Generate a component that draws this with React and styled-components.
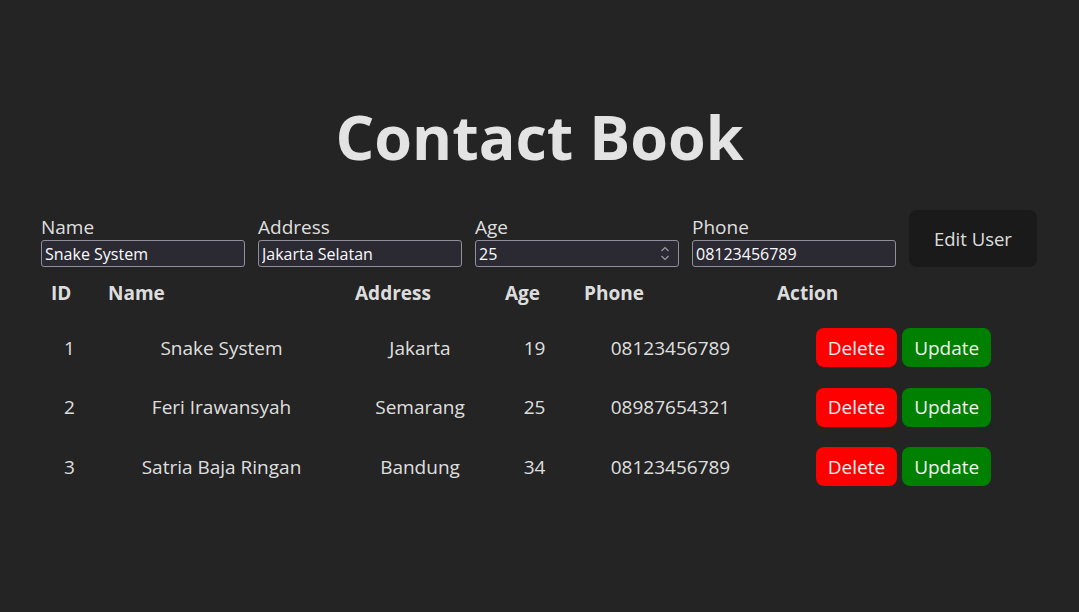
import styled, { createGlobalStyle } from "styled-components";

const GlobalStyle = createGlobalStyle`
  html, body {
    margin: 0;
    background: #242424;
    color: rgba(255, 255, 255, 0.87);
    font-family: "Open Sans", "Noto Sans", sans-serif;
  }
`;

const Page = styled.div`
  width: 1079px;
  height: 612px;
  box-sizing: border-box;
  padding: 95px 41px 0;
`;

const Title = styled.h1`
  margin: 0 0 31px;
  text-align: center;
  font-size: 61px;
  line-height: 84px;
  font-weight: 700;
  color: #e3e3e3;
`;

const Form = styled.form`
  display: flex;
  align-items: flex-end;
  gap: 13px;
`;

const Field = styled.label`
  display: flex;
  flex-direction: column;
  width: 204px;
  font-size: 19px;
  line-height: 25px;
`;

const InputWrap = styled.div`
  position: relative;
`;

const Input = styled.input`
  box-sizing: border-box;
  width: 100%;
  height: 27px;
  padding: 0 3px;
  background: #2b2a33;
  border: 1px solid #8f8f9d;
  border-radius: 3px;
  color: #fbfbfe;
  font-family: "Open Sans", sans-serif;
  font-size: 16px;
  outline: none;
`;

const Spinner = styled.svg`
  position: absolute;
  right: 9px;
  top: 6px;
  width: 10px;
  height: 15px;
`;

const EditButton = styled.button`
  height: 57px;
  padding: 0 25px;
  border: none;
  border-radius: 8px;
  background: #1a1a1a;
  color: rgba(255, 255, 255, 0.87);
  font-family: "Open Sans", sans-serif;
  font-size: 18.5px;
  font-weight: 500;
`;

const Table = styled.table`
  width: 999px;
  margin-top: 1px;
  border-spacing: 0;
  table-layout: fixed;
  font-size: 19px;
`;

const Th = styled.th`
  width: ${(p) => p.w - 20}px;
  height: 50px;
  padding: 0 10px;
  text-align: left;
  font-weight: 700;
  vertical-align: middle;
`;

const Td = styled.td`
  height: 59.5px;
  padding: 0 10px;
  text-align: center;
  vertical-align: middle;
  white-space: nowrap;
`;

const Actions = styled.div`
  display: flex;
  justify-content: center;
  gap: 5px;
`;

const ActionButton = styled.button`
  height: 39px;
  padding: 0 12px;
  border: none;
  border-radius: 8px;
  background: ${(p) => (p.danger ? "#ff0000" : "#008000")};
  color: #f2f2f2;
  font-family: "Open Sans", sans-serif;
  font-size: 19px;
`;

const contacts = [
  { id: 1, name: "Snake System", address: "Jakarta", age: 19, phone: "08123456789" },
  { id: 2, name: "Feri Irawansyah", address: "Semarang", age: 25, phone: "08987654321" },
  { id: 3, name: "Satria Baja Ringan", address: "Bandung", age: 34, phone: "08123456789" },
];

const columns = [
  ["ID", 57],
  ["Name", 247],
  ["Address", 150],
  ["Age", 79],
  ["Phone", 193],
  ["Action", 273],
];

const App = () => {
  return (
    <Page>
      <GlobalStyle />
      <Title>Contact Book</Title>

      <Form onSubmit={(e) => e.preventDefault()}>
        <Field>
          Name
          <Input defaultValue="Snake System" />
        </Field>
        <Field>
          Address
          <Input defaultValue="Jakarta Selatan" />
        </Field>
        <Field>
          Age
          <InputWrap>
            <Input defaultValue="25" />
            <Spinner viewBox="0 0 10 15" fill="none" stroke="#9a9aa6" strokeWidth="1.2">
              <path d="M1.5 5 L5 1.5 L8.5 5" />
              <path d="M1.5 10 L5 13.5 L8.5 10" />
            </Spinner>
          </InputWrap>
        </Field>
        <Field>
          Phone
          <Input defaultValue="08123456789" />
        </Field>
        <EditButton type="submit">Edit User</EditButton>
      </Form>

      <Table>
        <thead>
          <tr>
            {columns.map(([label, w]) => (
              <Th key={label} w={w}>
                {label}
              </Th>
            ))}
          </tr>
        </thead>
        <tbody>
          {contacts.map((c) => (
            <tr key={c.id}>
              <Td>{c.id}</Td>
              <Td>{c.name}</Td>
              <Td>{c.address}</Td>
              <Td>{c.age}</Td>
              <Td>{c.phone}</Td>
              <Td>
                <Actions>
                  <ActionButton danger>Delete</ActionButton>
                  <ActionButton>Update</ActionButton>
                </Actions>
              </Td>
            </tr>
          ))}
        </tbody>
      </Table>
    </Page>
  );
};

export default App;
